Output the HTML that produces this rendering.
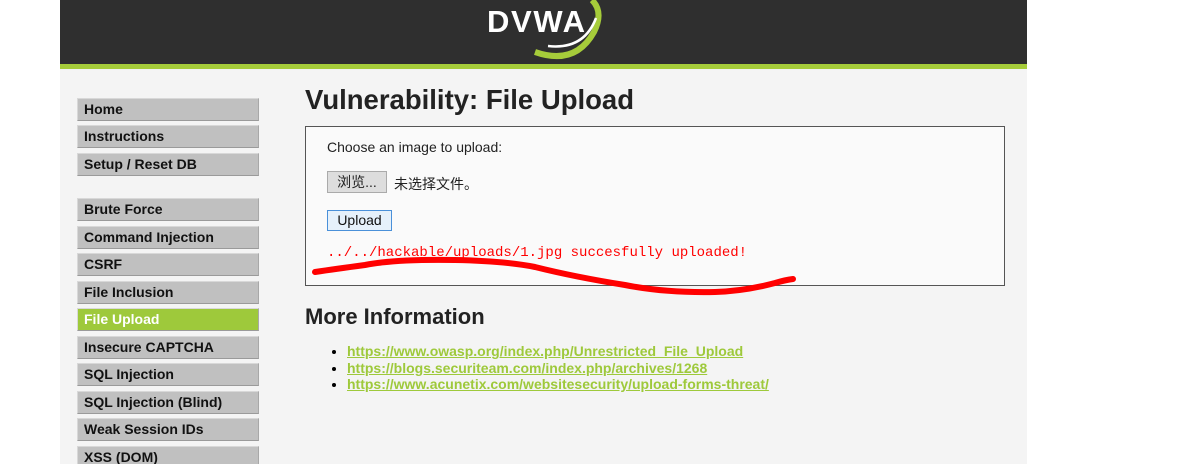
<!DOCTYPE html>
<html><head><meta charset="utf-8"><style>
body{margin:0;width:1187px;height:464px;overflow:hidden;background:#fff;font-family:"Liberation Sans",Arial,sans-serif;position:relative}
#c{position:absolute;left:60px;top:0;width:967px;height:464px;background:#f4f4f4;overflow:hidden}
#h{position:absolute;left:0;top:0;width:967px;height:64px;background:#2f2f2f;border-bottom:5px solid #a6cc3a}
.m{position:absolute;left:17px;width:174px;height:21px;background:#c0c0c0;border:1px solid #d8d8d8;border-bottom-color:#9a9a9a;border-right-color:#a8a8a8;font-size:14px;font-weight:bold;color:#111;line-height:21px;padding-left:6px;box-sizing:content-box}
.m.a{background:#9ec93b;color:#fff}
h1{position:absolute;left:245px;top:84px;margin:0;font-size:27.5px;color:#222}
#box{position:absolute;left:245px;top:126px;width:698px;height:158px;border:1px solid #555;background:#fafafa}
h2{position:absolute;left:245px;top:304px;margin:0;font-size:22px;color:#222}
ul{position:absolute;left:270px;top:343px;margin:0;padding-left:17px;font-size:14px;line-height:16.5px}
a{color:#9ec93b;font-weight:bold;text-decoration:underline}
.cj{font-family:"Liberation Sans","Noto Sans CJK SC",sans-serif}
</style></head><body>
<div id="c">
<div id="h">
<svg style="position:absolute;left:420px;top:0" width="130" height="64" viewBox="0 0 130 64">
<path d="M55 52 Q95 66 114 32 Q124 12 112 0" fill="none" stroke="#a6cc3a" stroke-width="6"/>
<path d="M68 46 Q104 50 116 18" fill="none" stroke="#fff" stroke-width="2.5"/>
<text x="7" y="32" font-family="Liberation Sans" font-weight="bold" font-size="31" fill="#fff" textLength="98">DVWA</text>
</svg>
</div>
<div class="m" style="top:98px">Home</div>
<div class="m" style="top:125px">Instructions</div>
<div class="m" style="top:153px">Setup / Reset DB</div>
<div class="m" style="top:198px">Brute Force</div>
<div class="m" style="top:226px">Command Injection</div>
<div class="m" style="top:253px">CSRF</div>
<div class="m" style="top:281px">File Inclusion</div>
<div class="m a" style="top:308px">File Upload</div>
<div class="m" style="top:336px">Insecure CAPTCHA</div>
<div class="m" style="top:363px">SQL Injection</div>
<div class="m" style="top:391px">SQL Injection (Blind)</div>
<div class="m" style="top:418px">Weak Session IDs</div>
<div class="m" style="top:446px">XSS (DOM)</div>
<h1>Vulnerability: File Upload</h1>
<div id="box">
<div style="position:absolute;left:21px;top:12px;font-size:14px;color:#222">Choose an image to upload:</div>
<div class="cj" style="position:absolute;left:21px;top:44px;width:58px;height:20px;background:#ddd;border:1px solid #aaa;font-size:14px;line-height:20px;text-align:center;color:#222">浏览...</div>
<div class="cj" style="position:absolute;left:88px;top:47px;font-size:14px;color:#222">未选择文件。</div>
<div style="position:absolute;left:21px;top:83px;width:63px;height:19px;background:#e6f1fb;border:1px solid #4a90d9;font-size:14px;line-height:19px;text-align:center;color:#111">Upload</div>
<div style="position:absolute;left:21px;top:118px;font-family:'Liberation Mono',monospace;font-size:14px;color:#f00">../../hackable/uploads/1.jpg succesfully uploaded!</div>
</div>
<svg style="position:absolute;left:245px;top:255px" width="560" height="45"><path d="M10 17 Q30 14 60 10 Q90 4 150 5 Q200 6 230 12 Q270 22 320 30 Q360 38 410 37 Q440 36 470 28 Q480 25 488 24" fill="none" stroke="#f00" stroke-width="6" stroke-linecap="round"/></svg>
<h2>More Information</h2>
<ul>
<li><a>https://www.owasp.org/index.php/Unrestricted_File_Upload</a></li>
<li><a>https://blogs.securiteam.com/index.php/archives/1268</a></li>
<li><a>https://www.acunetix.com/websitesecurity/upload-forms-threat/</a></li>
</ul>
</div>
</body></html>
